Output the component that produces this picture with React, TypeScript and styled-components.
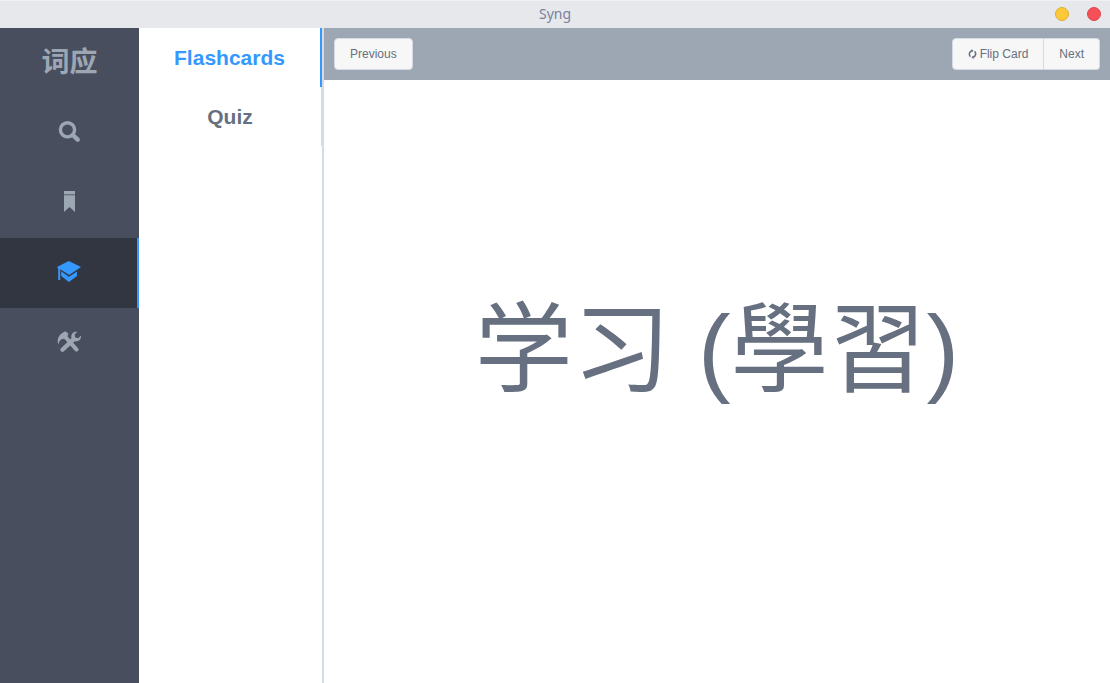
import React from "react";
import styled, { createGlobalStyle } from "styled-components";

const GlobalStyle = createGlobalStyle`
  * { box-sizing: border-box; }
  body { margin: 0; }
  button { font: inherit; cursor: pointer; }
`;

const Window = styled.div`
  display: flex;
  flex-direction: column;
  min-height: 100vh;
  background: #fff;
  color: #667080;
  font-family: "Liberation Sans", "Noto Sans CJK SC", sans-serif;
`;

const TitleBar = styled.header`
  display: grid;
  grid-template-columns: 1fr auto 1fr;
  align-items: center;
  height: 28px;
  padding: 0 9px;
  border-top: 1px solid #eff0f2;
  background: #e6e8ec;
`;

const Title = styled.h1`
  grid-column: 2;
  margin: 0;
  padding-bottom: 2px;
  color: #78829c;
  font: 400 14px/20px "Noto Sans", sans-serif;
`;

const WindowControls = styled.div`
  display: flex;
  justify-content: flex-end;
  gap: 18px;
  padding-bottom: 1px;
`;

const WindowControl = styled.button<{ $fill: string; $edge: string }>`
  width: 14px;
  height: 14px;
  padding: 0;
  border: 1px solid ${(p) => p.$edge};
  border-radius: 50%;
  background: ${(p) => p.$fill};
`;

const Body = styled.div`
  display: flex;
  flex: 1;
`;

const Sidebar = styled.nav`
  flex: 0 0 139px;
  background: #484e5e;
  color: #9da7b3;
`;

const Logo = styled.div`
  height: 70px;
  font: 700 28px/64px "Noto Sans CJK SC", sans-serif;
  text-align: center;
`;

const SidebarButton = styled.button<{ $active?: boolean }>`
  display: flex;
  align-items: center;
  justify-content: center;
  width: 100%;
  height: 70px;
  padding: 0;
  border: 0;
  background: ${(p) => (p.$active ? "#323640" : "transparent")};
  box-shadow: ${(p) => (p.$active ? "inset -2px 0 #3498fe" : "none")};
  color: ${(p) => (p.$active ? "#3498fe" : "inherit")};
`;

const SectionList = styled.nav`
  flex: 0 0 185px;
  border-right: 2px solid #d5dbe3;
`;

const SectionButton = styled.button<{ $active?: boolean }>`
  display: block;
  width: 100%;
  height: 59px;
  padding: 0;
  border: 0;
  border-right: ${(p) => (p.$active ? "2px solid #3498fe" : "1px solid #d5dbe3")};
  background: transparent;
  color: ${(p) => (p.$active ? "#3498fe" : "#667080")};
  font-size: 21px;
  font-weight: 700;
  text-align: center;
`;

const Main = styled.main`
  display: flex;
  flex: 1;
  flex-direction: column;
  min-width: 0;
`;

const Toolbar = styled.div`
  display: flex;
  align-items: center;
  justify-content: space-between;
  height: 52px;
  padding: 0 10px;
  background: #9da7b3;
`;

const ButtonGroup = styled.div`
  display: flex;
`;

const ToolButton = styled.button`
  display: flex;
  align-items: center;
  gap: 3px;
  height: 32px;
  padding: 0 15px;
  border: 1px solid #d5dbe3;
  background: #f7f7f7;
  color: #667080;
  font-size: 12px;

  &:first-child { border-radius: 4px 0 0 4px; }
  &:last-child { border-radius: 0 4px 4px 0; }
  &:only-child { border-radius: 4px; }
  & + & { border-left: 0; }
`;

const Card = styled.section`
  display: flex;
  flex: 1;
  align-items: center;
  justify-content: center;
  padding-bottom: 64px;
`;

const Word = styled.p`
  margin: 0;
  font-size: 98px;
  line-height: 140px;
  white-space: nowrap;
`;

const Icon = ({ children }: { children: React.ReactNode }) => (
  <svg width="25" height="24" viewBox="0 0 25 24" fill="currentColor" aria-hidden="true">
    {children}
  </svg>
);

const SearchIcon = () => (
  <Icon>
    <circle cx="10.5" cy="8.8" r="7.1" fill="none" stroke="currentColor" strokeWidth="3.4" />
    <path d="M15.8 14 20.7 18.7" stroke="currentColor" strokeWidth="4.4" strokeLinecap="round" />
  </Icon>
);

const BookmarkIcon = () => (
  <Icon>
    <path d="M7 0h11v3H7zM7 4.3h11V21l-5.5-5L7 21z" />
    <path d="M7 3h11v1.3H7z" opacity="0.4" />
  </Icon>
);

const StudyIcon = () => (
  <Icon>
    <path d="M11.8 0 24 6 12.2 14 3.2 8.2v10.8H1.2V7.6L-.2 6z" />
    <path d="M4.2 10.3 11.9 15.7 20 10.5V15l-8.1 6-7.7-6z" />
  </Icon>
);

const ToolsIcon = () => (
  <Icon>
    <path d="M1.2 13.4C.2 10.4.6 7 2.6 4.4 4.2 2.3 6.4 1.4 8.2.2L11.4 2.4 10.4 5.2 21.3 17.4q1 1.4-.4 2.6t-2.8 0L7.8 8.2Q6 7.2 4.2 8.6C2.6 9.8 1.9 11.4 1.2 13.4z" />
    <path d="M20.4.8 17.6 3.6l.6 2.9 3 .7 2.8-2.7c.5 3.8-2.6 6.6-6.2 5.8L7 20.3q-1.6 1.4-3 0t0-3L14.4 7.2C13.6 3 16.4-.1 20.4.8z" />
  </Icon>
);

const FlipIcon = () => (
  <svg width="9" height="10" viewBox="0 0 9 10" fill="none" stroke="currentColor" strokeWidth="1.6" aria-hidden="true">
    <path d="M2.4 7.8A3.6 3.6 0 0 1 3.8 1.8M6.6 2.2A3.6 3.6 0 0 1 5.2 8.2" />
    <path d="M3.4 0v3.6L5.6 1.8zM5.6 6.4V10L3.4 8.2z" fill="currentColor" stroke="none" />
  </svg>
);

export default function App() {
  return (
    <Window>
      <GlobalStyle />
      <TitleBar>
        <Title>Syng</Title>
        <WindowControls>
          <WindowControl $fill="#fdc938" $edge="#deaf30" aria-label="Minimize" />
          <WindowControl $fill="#f75057" $edge="#dc454c" aria-label="Close" />
        </WindowControls>
      </TitleBar>
      <Body>
        <Sidebar>
          <Logo lang="zh-Hans">词应</Logo>
          <SidebarButton aria-label="Search"><SearchIcon /></SidebarButton>
          <SidebarButton aria-label="Bookmarks"><BookmarkIcon /></SidebarButton>
          <SidebarButton $active aria-label="Study"><StudyIcon /></SidebarButton>
          <SidebarButton aria-label="Settings"><ToolsIcon /></SidebarButton>
        </Sidebar>
        <SectionList>
          <SectionButton $active>Flashcards</SectionButton>
          <SectionButton>Quiz</SectionButton>
        </SectionList>
        <Main>
          <Toolbar>
            <ButtonGroup>
              <ToolButton>Previous</ToolButton>
            </ButtonGroup>
            <ButtonGroup>
              <ToolButton><FlipIcon />Flip Card</ToolButton>
              <ToolButton>Next</ToolButton>
            </ButtonGroup>
          </Toolbar>
          <Card>
            <Word lang="zh-Hans">学习 (學習)</Word>
          </Card>
        </Main>
      </Body>
    </Window>
  );
}
